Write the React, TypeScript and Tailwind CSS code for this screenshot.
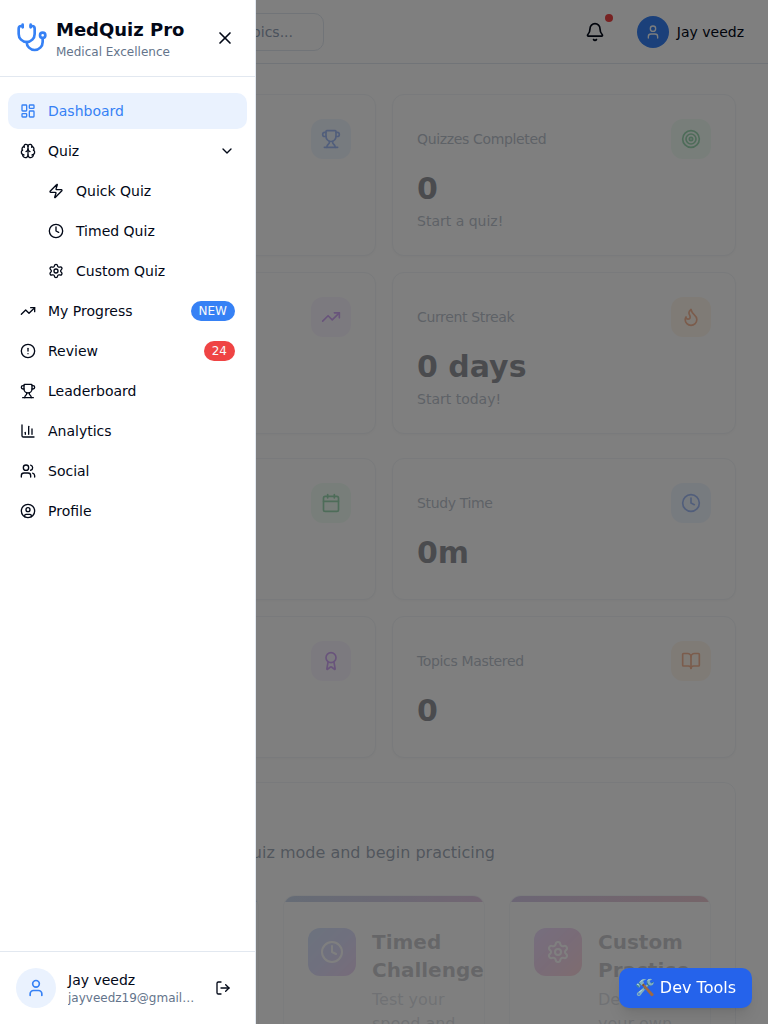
import React from 'react';
import {
  Award, Bell, BookOpen, Brain, Calendar, ChartColumn, ChevronDown, CircleAlert, CircleUser, Clock, Flame,
  LayoutDashboard, LogOut, Settings, Stethoscope, Target, TrendingUp, Trophy, User, Users, X, Zap,
  type LucideIcon,
} from 'lucide-react';

type NavEntry = {
  label: string;
  icon: LucideIcon;
  active?: boolean;
  nested?: boolean;
  expandable?: boolean;
  badge?: string;
  badgeClass?: string;
};

const NAV: NavEntry[] = [
  { label: 'Dashboard', icon: LayoutDashboard, active: true },
  { label: 'Quiz', icon: Brain, expandable: true },
  { label: 'Quick Quiz', icon: Zap, nested: true },
  { label: 'Timed Quiz', icon: Clock, nested: true },
  { label: 'Custom Quiz', icon: Settings, nested: true },
  { label: 'My Progress', icon: TrendingUp, badge: 'NEW', badgeClass: 'bg-[#3681f5]' },
  { label: 'Review', icon: CircleAlert, badge: '24', badgeClass: 'bg-[#ef4444]' },
  { label: 'Leaderboard', icon: Trophy },
  { label: 'Analytics', icon: ChartColumn },
  { label: 'Social', icon: Users },
  { label: 'Profile', icon: CircleUser },
];

const TONES = {
  blue: 'bg-[#dbeafe] text-[#2563eb]',
  green: 'bg-[#dcfce7] text-[#16a34a]',
  purple: 'bg-[#f3e8ff] text-[#9333ea]',
  orange: 'bg-[#ffedd5] text-[#ea580c]',
};

type Stat = { title?: string; value?: string; note?: string; icon: LucideIcon; tone: keyof typeof TONES };

const SUMMARY: Stat[] = [
  { icon: Trophy, tone: 'blue' },
  { title: 'Quizzes Completed', value: '0', note: 'Start a quiz!', icon: Target, tone: 'green' },
  { icon: TrendingUp, tone: 'purple' },
  { title: 'Current Streak', value: '0 days', note: 'Start today!', icon: Flame, tone: 'orange' },
];

const DETAILS: Stat[] = [
  { icon: Calendar, tone: 'green' },
  { title: 'Study Time', value: '0m', icon: Clock, tone: 'blue' },
  { icon: Award, tone: 'purple' },
  { title: 'Topics Mastered', value: '0', icon: BookOpen, tone: 'orange' },
];

function NavItem({ item }: { item: NavEntry }) {
  const Icon = item.icon;
  return (
    <a
      className={`flex h-9 items-center gap-3 rounded-[10px] pr-3 text-sm ${item.nested ? 'pl-10' : 'pl-3'} ${
        item.active ? 'bg-[#eaf2fe] text-[#3681f5]' : 'text-[#020817]'
      }`}
    >
      <Icon size={16} className="shrink-0" />
      <span className="flex-1">{item.label}</span>
      {item.badge && (
        <span className={`rounded-full px-2 py-0.5 text-xs text-[#f8fafc] ${item.badgeClass}`}>{item.badge}</span>
      )}
      {item.expandable && <ChevronDown size={16} />}
    </a>
  );
}

function Sidebar() {
  return (
    <aside className="fixed inset-y-0 left-0 z-20 flex w-64 flex-col border-r border-[#e2e8f0] bg-white">
      <div className="flex h-[77px] shrink-0 items-center border-b border-[#e2e8f0] pl-4 pr-5">
        <Stethoscope size={32} className="text-[#3681f5]" />
        <div className="ml-2 flex-1">
          <div className="text-lg font-bold leading-7 text-[#020817]">MedQuiz Pro</div>
          <div className="text-xs text-[#64748b]">Medical Excellence</div>
        </div>
        <X size={20} className="text-[#020817]" />
      </div>
      <nav className="flex flex-1 flex-col gap-1 px-2 py-4">
        {NAV.map((item) => (
          <NavItem key={item.label} item={item} />
        ))}
      </nav>
      <div className="flex h-[73px] shrink-0 items-center border-t border-[#e2e8f0] pl-4 pr-6">
        <div className="flex size-10 shrink-0 items-center justify-center rounded-full bg-[#eaf2fe] text-[#3681f5]">
          <User size={20} />
        </div>
        <div className="ml-3 w-[127px]">
          <div className="text-sm text-[#020817]">Jay veedz</div>
          <div className="truncate text-xs text-[#64748b]">jayveedz19@gmail.com</div>
        </div>
        <LogOut size={16} className="ml-auto shrink-0 text-[#020817]" />
      </div>
    </aside>
  );
}

function Header() {
  return (
    <header className="flex h-16 items-center justify-between border-b border-[#e2e8f0] bg-white pr-6">
      <div className="flex h-[38px] w-[324px] items-center justify-end rounded-[10px] border border-[#e2e8f0] pr-[30px] text-sm text-[#94a3b8]">
        Search topics...
      </div>
      <div className="flex items-center">
        <div className="relative mr-8 text-[#020817]">
          <Bell size={20} />
          <span className="absolute -right-2 -top-2 size-2 rounded-full bg-[#ef4444]" />
        </div>
        <div className="flex size-8 items-center justify-center rounded-full bg-[#3681f5] text-[#f8fafc]">
          <User size={16} />
        </div>
        <span className="ml-2 text-sm text-[#020817]">Jay veedz</span>
      </div>
    </header>
  );
}

function StatCard({ stat, height }: { stat: Stat; height: string }) {
  const Icon = stat.icon;
  return (
    <div className={`rounded-xl border border-[#e2e8f0] bg-white p-6 opacity-42 shadow-sm shadow-black/5 ${height}`}>
      <div className="flex h-10 items-center justify-between">
        <span className="text-sm tracking-tight text-[#64748b]">{stat.title}</span>
        <span className={`flex size-10 items-center justify-center rounded-xl ${TONES[stat.tone]}`}>
          <Icon size={20} />
        </span>
      </div>
      <div className="mt-2 h-11 text-3xl font-bold leading-11 text-[#020817]">{stat.value}</div>
      {stat.note && <div className="text-sm text-[#64748b]">{stat.note}</div>}
    </div>
  );
}

type ModeProps = { title: string; text: string; icon: LucideIcon; bar: string; tile: string };

function ModeCard({ title, text, icon: Icon, bar, tile }: ModeProps) {
  return (
    <div className="h-80 overflow-hidden rounded-xl border border-[#e2e8f0]/30 bg-white">
      <div className={`h-1.5 opacity-40 ${bar}`} />
      <div className="flex items-start gap-4 px-6 pt-[26px] opacity-20">
        <div className={`flex size-12 shrink-0 items-center justify-center rounded-xl text-white ${tile}`}>
          <Icon size={24} />
        </div>
        <div>
          <div className="text-xl font-bold leading-7 text-[#020817]">{title}</div>
          <div className="mt-1 w-[90px] text-base leading-6 text-[#64748b]">{text}</div>
        </div>
      </div>
    </div>
  );
}

export default function App() {
  return (
    <div className="h-screen overflow-hidden bg-white font-['DejaVu_Sans',sans-serif]">
      <Header />
      <main className="px-8 pt-[30px]">
        <div className="grid grid-cols-2 gap-4">
          {SUMMARY.map((stat, i) => (
            <StatCard key={i} stat={stat} height="h-[162px]" />
          ))}
        </div>
        <div className="mt-6 grid grid-cols-2 gap-4">
          {DETAILS.map((stat, i) => (
            <StatCard key={i} stat={stat} height="h-[142px]" />
          ))}
        </div>
        <section className="mt-6 h-[480px] rounded-xl border border-[#e2e8f0]/45 p-6">
          <div className="mt-[34px] text-right text-base leading-6 text-[#64748b]/60">
            <div className="w-[438px]">Choose your quiz mode and begin practicing</div>
          </div>
          <div className="mt-[30px] grid grid-cols-3 gap-6">
            <ModeCard title="" text="" icon={Zap} bar="bg-blue-400" tile="bg-blue-400" />
            <ModeCard
              title="Timed Challenge"
              text="Test your speed and accuracy"
              icon={Clock}
              bar="bg-linear-to-r from-[#7f9fd0] via-[#9b8fc6] to-[#bd80c0]"
              tile="bg-linear-to-br from-[#3b82f6] via-[#6366f1] to-[#a835c7]"
            />
            <ModeCard
              title="Custom Practice"
              text="Design your own quiz"
              icon={Settings}
              bar="bg-linear-to-r from-[#9f80cc] to-[#d07a90]"
              tile="bg-linear-to-br from-[#a855f7] via-[#c13ab0] to-[#f43f5e]"
            />
          </div>
        </section>
      </main>
      <div className="fixed inset-0 z-10 bg-black/50" />
      <Sidebar />
      <button className="fixed bottom-4 right-4 z-30 rounded-[10px] bg-[#2563eb] px-4 py-2 text-base leading-6 text-white shadow-lg">
        🛠️ Dev Tools
      </button>
    </div>
  );
}
